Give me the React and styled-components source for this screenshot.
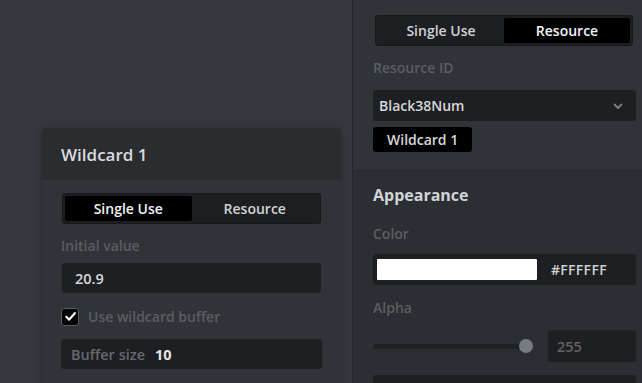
import React from 'react';
import styled, { createGlobalStyle } from 'styled-components';

const GlobalStyle = createGlobalStyle`
  html, body {
    margin: 0;
    padding: 0;
    background: #34373c;
    font-family: "Open Sans", "Noto Sans", sans-serif;
    overflow: hidden;
  }
  * { box-sizing: border-box; }
`;

const Screen = styled.div`
  display: flex;
  width: 642px;
  height: 383px;
  overflow: hidden;
`;

const Canvas = styled.div`
  flex: 1;
  background: #34373c;
  padding: 128px 0 0 42px;
  overflow: hidden;
`;

const Card = styled.div`
  width: 299px;
  height: 300px;
  border-radius: 5px;
  background: #303337;
  box-shadow: 0 1px 6px rgba(0, 0, 0, 0.25);
  overflow: hidden;
`;

const CardHeader = styled.div`
  height: 52px;
  background: #2a2c30;
  display: flex;
  align-items: center;
  padding-left: 19px;
  font-size: 17px;
  font-weight: 600;
  color: #d9dbde;
`;

const CardBody = styled.div`
  padding: 13px 20px 0 20px;
  display: flex;
  flex-direction: column;
`;

const Segmented = styled.div`
  display: flex;
  height: 31px;
  padding: 2px;
  border-radius: 3px;
  background: #1c1e21;
  border: 1px solid #17181a;
`;

const Segment = styled.div`
  flex: 1;
  display: flex;
  align-items: center;
  justify-content: center;
  font-size: 14px;
  font-weight: 600;
  color: ${p => (p.$active ? '#f2f3f4' : '#cfd2d5')};
  background: ${p => (p.$active ? '#000' : 'transparent')};
  border-radius: 2px;
`;

const Label = styled.div`
  font-size: 14px;
  font-weight: 600;
  color: #5a5e64;
  margin: ${p => p.$margin || '0'};
`;

const Field = styled.div`
  display: flex;
  align-items: center;
  flex-shrink: 0;
  height: ${p => p.$h || 31}px;
  background: #1d1f22;
  border-radius: 3px;
  padding: 0 ${p => p.$pad || 13}px;
  font-size: 14.5px;
  font-weight: 600;
  color: #d6d8db;
  margin: ${p => p.$margin || '0'};
`;

const CheckRow = styled.div`
  display: flex;
  align-items: center;
  gap: 9px;
  margin: 14px 0 0 -1px;
  font-size: 14px;
  font-weight: 600;
  color: #5a5e64;
`;

const CheckBox = styled.div`
  width: 18px;
  height: 18px;
  border-radius: 3px;
  background: #050506;
  border: 1px solid #5a5d62;
  display: flex;
  align-items: center;
  justify-content: center;
`;

const BufferLabel = styled.span`
  color: #656970;
  font-size: 14.5px;
  font-weight: 600;
`;

const BufferValue = styled.span`
  color: #e4e6e8;
  font-weight: 700;
  font-size: 14.5px;
  margin-left: 10px;
`;

const Panel = styled.div`
  width: 290px;
  border-left: 1px solid #26282c;
  background: #2b2e32;
  display: flex;
  flex-direction: column;
`;

const TopSection = styled.div`
  flex-shrink: 0;
  background: #303337;
  height: 171px;
  border-bottom: 1px solid #26282b;
  padding: 15px 6px 0 20px;
  display: flex;
  flex-direction: column;
`;

const PanelSeg = styled(Segmented)`
  margin: 0 3px 0 2px;
`;

const Select = styled(Field)`
  justify-content: space-between;
  padding: 0 12px 0 6px;
  font-size: 14px;
`;

const Chip = styled.div`
  align-self: flex-start;
  margin-top: 6px;
  height: 25px;
  padding: 0 14px;
  background: #000;
  border-radius: 3px;
  display: flex;
  align-items: center;
  font-size: 14px;
  font-weight: 600;
  color: #d6d8db;
`;

const Section = styled.div`
  padding: 13px 6px 0 20px;
  display: flex;
  flex-direction: column;
`;

const SectionTitle = styled.div`
  font-size: 16px;
  font-weight: 700;
  color: #d2d5d8;
`;

const ColorField = styled(Field)`
  padding: 0 4px;
  gap: 14px;
`;

const Swatch = styled.div`
  width: 160px;
  height: 21px;
  background: #fff;
  border-radius: 1px;
`;

const HexText = styled.span`
  font-size: 14px;
  color: #cfd2d5;
  letter-spacing: 0.3px;
`;

const SliderRow = styled.div`
  display: flex;
  align-items: center;
  gap: 22px;
  margin-top: 13px;
`;

const Track = styled.div`
  position: relative;
  flex: 1;
  height: 5px;
  border-radius: 3px;
  background: #1f2124;
`;

const Thumb = styled.div`
  position: absolute;
  right: -7px;
  top: 50%;
  width: 14px;
  height: 14px;
  margin-top: -7px;
  border-radius: 50%;
  background: #777b82;
`;

const NumBox = styled(Field)`
  width: 88px;
  height: 32px;
  padding: 0 9px;
  color: #5f6369;
`;

const Chevron = () => (
  <svg width="12" height="12" viewBox="0 0 12 12">
    <path d="M2.5 4.5 L6 8 L9.5 4.5" fill="none" stroke="#7a7e84" strokeWidth="1.8" strokeLinecap="round" strokeLinejoin="round" />
  </svg>
);

const Check = () => (
  <svg width="13" height="13" viewBox="0 0 13 13">
    <path d="M2.3 6.8 L5.2 9.6 L10.8 3.2" fill="none" stroke="#fff" strokeWidth="2.2" strokeLinecap="round" strokeLinejoin="round" />
  </svg>
);

export default function App() {
  return (
    <>
      <GlobalStyle />
      <Screen>
        <Canvas>
          <Card>
            <CardHeader>Wildcard 1</CardHeader>
            <CardBody>
              <Segmented>
                <Segment $active>Single Use</Segment>
                <Segment>Resource</Segment>
              </Segmented>
              <Label $margin="12px 0 0 -1px">Initial value</Label>
              <Field $margin="8px 0 0 0" $h={30}>20.9</Field>
              <CheckRow>
                <CheckBox><Check /></CheckBox>
                Use wildcard buffer
              </CheckRow>
              <Field $margin="13px -1px 0 -1px" $h={30} $pad={10}>
                <BufferLabel>Buffer size</BufferLabel>
                <BufferValue>10</BufferValue>
              </Field>
            </CardBody>
          </Card>
        </Canvas>
        <Panel>
          <TopSection>
            <PanelSeg>
              <Segment>Single Use</Segment>
              <Segment $active>Resource</Segment>
            </PanelSeg>
            <Label $margin="12px 0 0 0">Resource ID</Label>
            <Select $margin="13px 0 0 0">
              Black38Num
              <Chevron />
            </Select>
            <Chip>Wildcard 1</Chip>
          </TopSection>
          <Section>
            <SectionTitle>Appearance</SectionTitle>
            <Label $margin="18px 0 0 0">Color</Label>
            <ColorField $margin="11px 0 0 0">
              <Swatch />
              <HexText>#FFFFFF</HexText>
            </ColorField>
            <Label $margin="13px 0 0 0">Alpha</Label>
            <SliderRow>
              <Track><Thumb /></Track>
              <NumBox>255</NumBox>
            </SliderRow>
            <Field $margin="13px 0 0 0" />
          </Section>
        </Panel>
      </Screen>
    </>
  );
}
